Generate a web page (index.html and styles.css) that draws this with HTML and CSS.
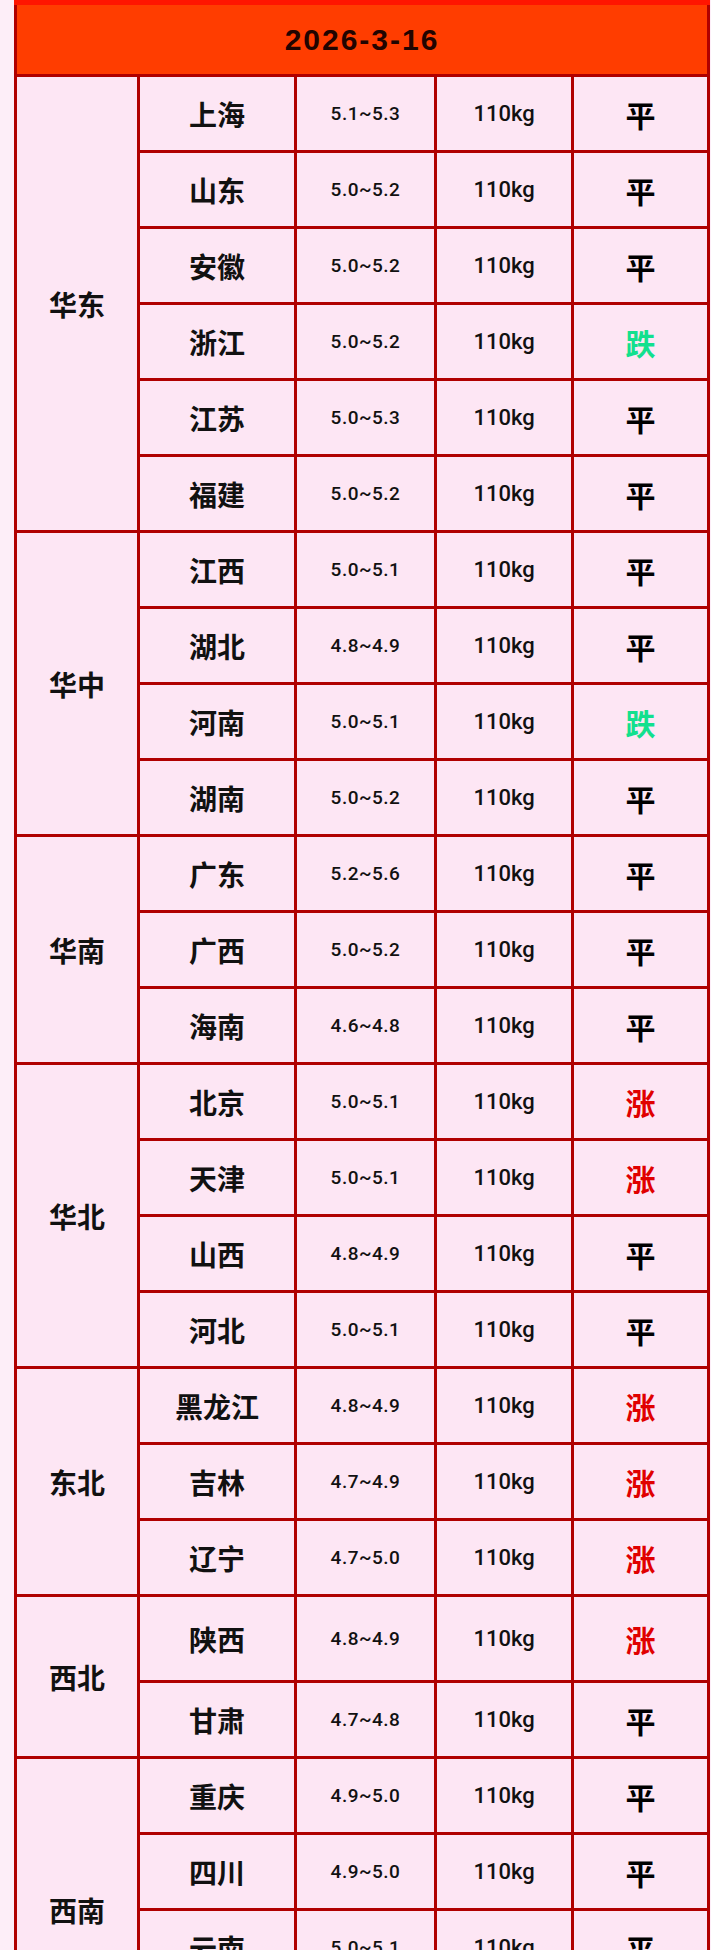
FILE: index.html
```html
<!DOCTYPE html>
<html lang="zh-CN">
<head>
<meta charset="utf-8">
<title>2026-3-16</title>
<link rel="stylesheet" href="styles.css">
</head>
<body>
<div class="page">
<table class="price-table">
  <colgroup>
    <col class="c-region">
    <col class="c-prov">
    <col class="c-range">
    <col class="c-weight">
    <col class="c-trend">
  </colgroup>
  <thead>
    <tr class="head-row"><th colspan="5" class="date">2026-3-16</th></tr>
  </thead>
  <tbody>
    <tr><td class="region" rowspan="6">华东</td><td class="prov">上海</td><td class="range">5.1~5.3</td><td class="weight">110kg</td><td class="trend">平</td></tr>
    <tr><td class="prov">山东</td><td class="range">5.0~5.2</td><td class="weight">110kg</td><td class="trend">平</td></tr>
    <tr><td class="prov">安徽</td><td class="range">5.0~5.2</td><td class="weight">110kg</td><td class="trend">平</td></tr>
    <tr><td class="prov">浙江</td><td class="range">5.0~5.2</td><td class="weight">110kg</td><td class="trend down">跌</td></tr>
    <tr><td class="prov">江苏</td><td class="range">5.0~5.3</td><td class="weight">110kg</td><td class="trend">平</td></tr>
    <tr><td class="prov">福建</td><td class="range">5.0~5.2</td><td class="weight">110kg</td><td class="trend">平</td></tr>

    <tr><td class="region" rowspan="4">华中</td><td class="prov">江西</td><td class="range">5.0~5.1</td><td class="weight">110kg</td><td class="trend">平</td></tr>
    <tr><td class="prov">湖北</td><td class="range">4.8~4.9</td><td class="weight">110kg</td><td class="trend">平</td></tr>
    <tr><td class="prov">河南</td><td class="range">5.0~5.1</td><td class="weight">110kg</td><td class="trend down">跌</td></tr>
    <tr><td class="prov">湖南</td><td class="range">5.0~5.2</td><td class="weight">110kg</td><td class="trend">平</td></tr>

    <tr><td class="region" rowspan="3">华南</td><td class="prov">广东</td><td class="range">5.2~5.6</td><td class="weight">110kg</td><td class="trend">平</td></tr>
    <tr><td class="prov">广西</td><td class="range">5.0~5.2</td><td class="weight">110kg</td><td class="trend">平</td></tr>
    <tr><td class="prov">海南</td><td class="range">4.6~4.8</td><td class="weight">110kg</td><td class="trend">平</td></tr>

    <tr><td class="region" rowspan="4">华北</td><td class="prov">北京</td><td class="range">5.0~5.1</td><td class="weight">110kg</td><td class="trend up">涨</td></tr>
    <tr><td class="prov">天津</td><td class="range">5.0~5.1</td><td class="weight">110kg</td><td class="trend up">涨</td></tr>
    <tr><td class="prov">山西</td><td class="range">4.8~4.9</td><td class="weight">110kg</td><td class="trend">平</td></tr>
    <tr><td class="prov">河北</td><td class="range">5.0~5.1</td><td class="weight">110kg</td><td class="trend">平</td></tr>

    <tr><td class="region" rowspan="3">东北</td><td class="prov">黑龙江</td><td class="range">4.8~4.9</td><td class="weight">110kg</td><td class="trend up">涨</td></tr>
    <tr><td class="prov">吉林</td><td class="range">4.7~4.9</td><td class="weight">110kg</td><td class="trend up">涨</td></tr>
    <tr><td class="prov">辽宁</td><td class="range">4.7~5.0</td><td class="weight">110kg</td><td class="trend up">涨</td></tr>

    <tr class="tall"><td class="region" rowspan="2">西北</td><td class="prov">陕西</td><td class="range">4.8~4.9</td><td class="weight">110kg</td><td class="trend up">涨</td></tr>
    <tr><td class="prov">甘肃</td><td class="range">4.7~4.8</td><td class="weight">110kg</td><td class="trend">平</td></tr>

    <tr><td class="region" rowspan="4">西南</td><td class="prov">重庆</td><td class="range">4.9~5.0</td><td class="weight">110kg</td><td class="trend">平</td></tr>
    <tr><td class="prov">四川</td><td class="range">4.9~5.0</td><td class="weight">110kg</td><td class="trend">平</td></tr>
    <tr><td class="prov">云南</td><td class="range">5.0~5.1</td><td class="weight">110kg</td><td class="trend">平</td></tr>
    <tr><td class="prov">贵州</td><td class="range">4.9~5.0</td><td class="weight">110kg</td><td class="trend">平</td></tr>
  </tbody>
</table>
</div>
</body>
</html>
```

FILE: styles.css
```css
html, body {
  margin: 0;
  padding: 0;
  background: #fdeef8;
}

.page {
  height: 1950px;
  overflow: hidden;
  padding-left: 14px;
}

.price-table {
  border-collapse: collapse;
  table-layout: fixed;
  width: 693px;
  background: #fde6f4;
  font-family: "Noto Sans CJK SC", "Noto Sans", sans-serif;
  color: #111;
}

.c-region { width: 123px; }
.c-prov { width: 157px; }
.c-range { width: 140px; }
.c-weight { width: 137px; }
.c-trend { width: 136px; }

.price-table td,
.price-table th {
  border: 3px solid #b00000;
  padding: 0;
  text-align: center;
  vertical-align: middle;
}

.head-row {
  height: 73px;
}

.date {
  background: #ff3d00;
  border-top: 5px solid #ff1500 !important;
  font-family: "Liberation Sans", Arial, sans-serif;
  font-size: 30px;
  font-weight: 700;
  letter-spacing: 2px;
  color: #220400;
}

.price-table tbody tr {
  height: 76px;
}

.price-table tbody tr.tall {
  height: 86px;
}

.region,
.prov {
  font-size: 28px;
  font-weight: 700;
  padding-bottom: 4px;
}

.range {
  font-family: Roboto, "Liberation Sans", sans-serif;
  font-size: 19px;
  font-weight: 500;
  letter-spacing: 0.5px;
}

.weight {
  font-family: Roboto, "Liberation Sans", sans-serif;
  font-size: 22px;
  font-weight: 500;
}

.trend {
  font-size: 30px;
  font-weight: 700;
  color: #000;
  padding-bottom: 4px;
}

.trend.down {
  color: #12e08e;
}

.trend.up {
  color: #e00000;
}
```
